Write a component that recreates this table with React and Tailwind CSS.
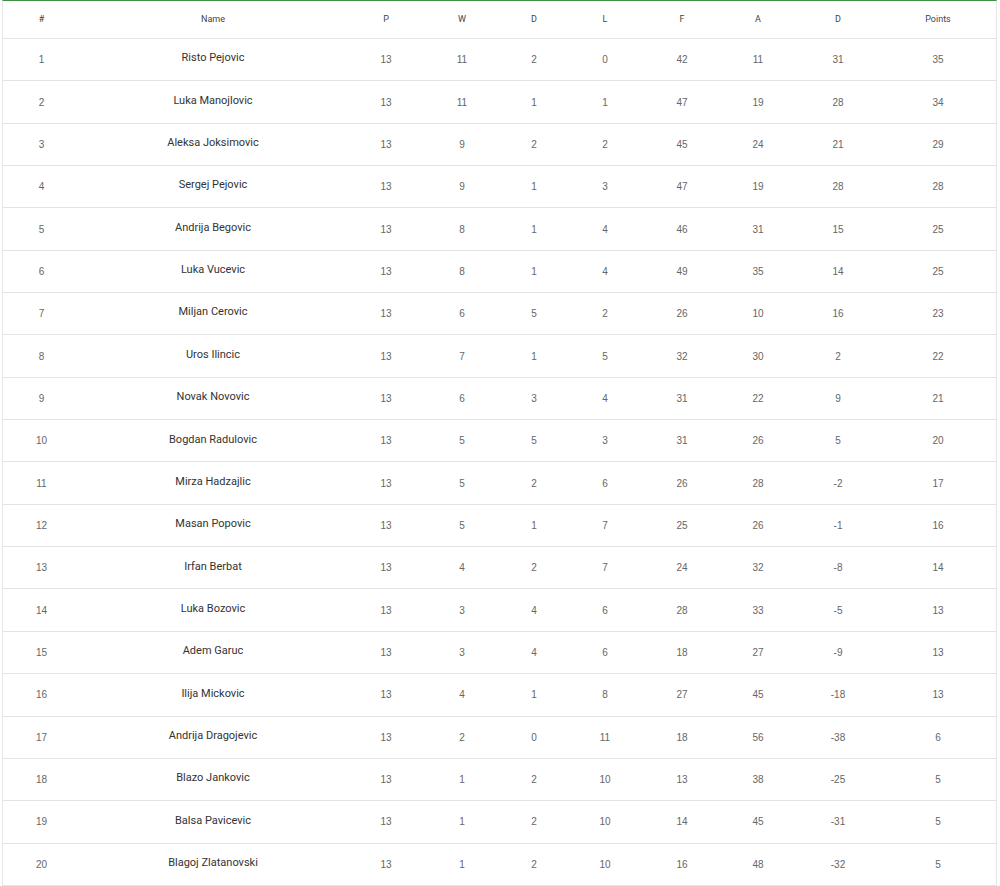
import React from "react";

const rows = [
  [1, "Risto Pejovic", 13, 11, 2, 0, 42, 11, 31, 35],
  [2, "Luka Manojlovic", 13, 11, 1, 1, 47, 19, 28, 34],
  [3, "Aleksa Joksimovic", 13, 9, 2, 2, 45, 24, 21, 29],
  [4, "Sergej Pejovic", 13, 9, 1, 3, 47, 19, 28, 28],
  [5, "Andrija Begovic", 13, 8, 1, 4, 46, 31, 15, 25],
  [6, "Luka Vucevic", 13, 8, 1, 4, 49, 35, 14, 25],
  [7, "Miljan Cerovic", 13, 6, 5, 2, 26, 10, 16, 23],
  [8, "Uros Ilincic", 13, 7, 1, 5, 32, 30, 2, 22],
  [9, "Novak Novovic", 13, 6, 3, 4, 31, 22, 9, 21],
  [10, "Bogdan Radulovic", 13, 5, 5, 3, 31, 26, 5, 20],
  [11, "Mirza Hadzajlic", 13, 5, 2, 6, 26, 28, -2, 17],
  [12, "Masan Popovic", 13, 5, 1, 7, 25, 26, -1, 16],
  [13, "Irfan Berbat", 13, 4, 2, 7, 24, 32, -8, 14],
  [14, "Luka Bozovic", 13, 3, 4, 6, 28, 33, -5, 13],
  [15, "Adem Garuc", 13, 3, 4, 6, 18, 27, -9, 13],
  [16, "Ilija Mickovic", 13, 4, 1, 8, 27, 45, -18, 13],
  [17, "Andrija Dragojevic", 13, 2, 0, 11, 18, 56, -38, 6],
  [18, "Blazo Jankovic", 13, 1, 2, 10, 13, 38, -25, 5],
  [19, "Balsa Pavicevic", 13, 1, 2, 10, 14, 45, -31, 5],
  [20, "Blagoj Zlatanovski", 13, 1, 2, 10, 16, 48, -32, 5],
];

const headers = ["#", "Name", "P", "W", "D", "L", "F", "A", "D", "Points"];
const grid =
  "grid grid-cols-[77px_266px_80px_72px_72px_70px_84px_68px_92px_108px] items-center";

export default function App() {
  return (
    <div className="w-[1000px] h-[886px] bg-white overflow-hidden font-['Roboto','Liberation_Sans',Arial,sans-serif]">
      <div className="ml-[2px] w-[995px] border-t border-t-[#3f8f3f] border-l border-r border-l-[#e6e6e6] border-r-[#e6e6e6]">
        <div className={`${grid} h-[38px] border-b border-[#e3e3e3] text-[9px] text-[#444]`}>
          {headers.map((h, i) => (
            <div key={i} className="text-center">{h}</div>
          ))}
        </div>
        {rows.map((r) => (
          <div key={r[0]} className={`${grid} h-[42.35px] border-b border-[#e3e3e3]`}>
            {r.map((c, i) => (
              <div
                key={i}
                className={
                  i === 1
                    ? "text-center text-[11px] text-[#333] -mt-[2px]"
                    : "text-center text-[10px] text-[#666] font-['Liberation_Sans',Arial,sans-serif]"
                }
              >
                {c}
              </div>
            ))}
          </div>
        ))}
      </div>
    </div>
  );
}
